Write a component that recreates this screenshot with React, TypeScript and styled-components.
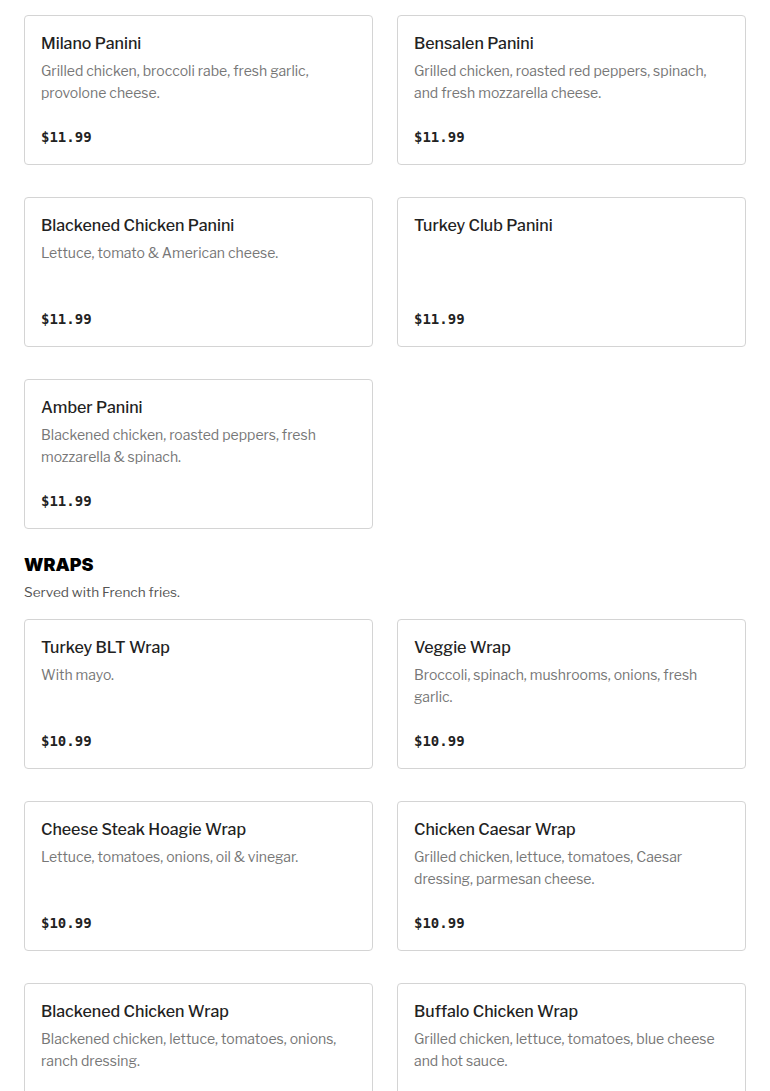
import styled, { createGlobalStyle } from "styled-components";

const GlobalStyle = createGlobalStyle`
  body {
    margin: 0;
    background: #ffffff;
    font-family: "Libre Franklin", "Inter", "Liberation Sans", sans-serif;
    color: #222222;
  }
`;

type Item = { name: string; description?: string; price: string };
type Section = { title?: string; note?: string; items: Item[] };

const sections: Section[] = [
  {
    items: [
      { name: "Milano Panini", description: "Grilled chicken, broccoli rabe, fresh garlic, provolone cheese.", price: "$11.99" },
      { name: "Bensalen Panini", description: "Grilled chicken, roasted red peppers, spinach, and fresh mozzarella cheese.", price: "$11.99" },
      { name: "Blackened Chicken Panini", description: "Lettuce, tomato & American cheese.", price: "$11.99" },
      { name: "Turkey Club Panini", price: "$11.99" },
      { name: "Amber Panini", description: "Blackened chicken, roasted peppers, fresh mozzarella & spinach.", price: "$11.99" },
    ],
  },
  {
    title: "Wraps",
    note: "Served with French fries.",
    items: [
      { name: "Turkey BLT Wrap", description: "With mayo.", price: "$10.99" },
      { name: "Veggie Wrap", description: "Broccoli, spinach, mushrooms, onions, fresh garlic.", price: "$10.99" },
      { name: "Cheese Steak Hoagie Wrap", description: "Lettuce, tomatoes, onions, oil & vinegar.", price: "$10.99" },
      { name: "Chicken Caesar Wrap", description: "Grilled chicken, lettuce, tomatoes, Caesar dressing, parmesan cheese.", price: "$10.99" },
      { name: "Blackened Chicken Wrap", description: "Blackened chicken, lettuce, tomatoes, onions, ranch dressing.", price: "$10.99" },
      { name: "Buffalo Chicken Wrap", description: "Grilled chicken, lettuce, tomatoes, blue cheese and hot sauce.", price: "$10.99" },
    ],
  },
];

const Page = styled.main`
  padding: 15px 24px 0 24px;
`;

const MenuSection = styled.section`
  & + & {
    margin-top: 24px;
  }
`;

const SectionTitle = styled.h2`
  margin: 0;
  font-family: "Inter", "Liberation Sans", Arial, sans-serif;
  font-weight: 900;
  font-size: 18px;
  line-height: 24px;
  text-transform: uppercase;
  color: #000000;
`;

const SectionNote = styled.p`
  margin: 4px 0 16px 0;
  font-size: 13.6px;
  line-height: 22px;
  color: #555555;
`;

const Grid = styled.div`
  display: grid;
  grid-template-columns: repeat(2, 1fr);
  column-gap: 24px;
  row-gap: 32px;
`;

const Card = styled.article`
  border: 1px solid #d4d4d4;
  border-radius: 4px;
  padding: 16px;
  display: flex;
  flex-direction: column;
`;

const ItemName = styled.h3`
  margin: 0;
  font-size: 16px;
  line-height: 24px;
  font-weight: 500;
  color: #222222;
`;

const ItemDescription = styled.p`
  margin: 4px 0 0 0;
  min-height: 44px;
  font-size: 14px;
  line-height: 22px;
  color: #777777;
`;

const Price = styled.div`
  margin-top: 22px;
  font-family: "DejaVu Sans Mono", "Liberation Mono", monospace;
  font-weight: 700;
  font-size: 14px;
  line-height: 22px;
  color: #222222;
`;

export default function App() {
  return (
    <>
      <GlobalStyle />
      <Page>
        {sections.map((section, i) => (
          <MenuSection key={i}>
            {section.title && <SectionTitle>{section.title}</SectionTitle>}
            {section.note && <SectionNote>{section.note}</SectionNote>}
            <Grid>
              {section.items.map((item) => (
                <Card key={item.name}>
                  <ItemName>{item.name}</ItemName>
                  <ItemDescription>{item.description}</ItemDescription>
                  <Price>{item.price}</Price>
                </Card>
              ))}
            </Grid>
          </MenuSection>
        ))}
      </Page>
    </>
  );
}
